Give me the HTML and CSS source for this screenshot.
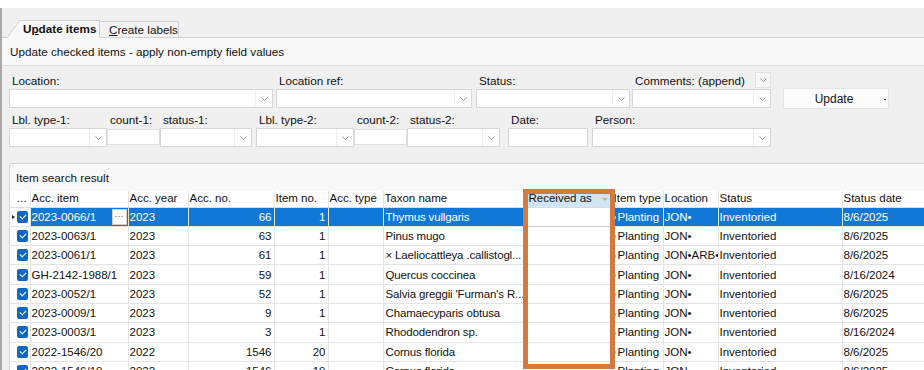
FILE: index.html
```html
<!DOCTYPE html>
<html lang="en">
<head>
    <meta charset="UTF-8">
    <meta name="viewport" content="width=device-width, initial-scale=1.0">
    <title>Update items</title>
    <link rel="stylesheet" href="styles.css">
</head>
<body>
    <div class="window">
        <div class="tabs">
            <div class="tab tab-active">U<u>p</u>date items</div>
            <div class="tab"><u>C</u>reate labels</div>
        </div>

        <div class="page-caption">Update checked items - apply non-empty field values</div>

        <div class="form">
            <div class="form-row">
                <div class="field w-location">
                    <div class="label">Location:</div>
                    <div class="combo"><span class="combo-btn"><svg width="7" height="4" viewBox="0 0 7 4"><path d="M0.5 0.5 L3.5 3.5 L6.5 0.5" fill="none" stroke="#9c9c9c"/></svg></span></div>
                </div>
                <div class="field w-locref">
                    <div class="label">Location ref:</div>
                    <div class="combo"><span class="combo-btn"><svg width="7" height="4" viewBox="0 0 7 4"><path d="M0.5 0.5 L3.5 3.5 L6.5 0.5" fill="none" stroke="#9c9c9c"/></svg></span></div>
                </div>
                <div class="field w-status">
                    <div class="label">Status:</div>
                    <div class="combo"><span class="combo-btn"><svg width="7" height="4" viewBox="0 0 7 4"><path d="M0.5 0.5 L3.5 3.5 L6.5 0.5" fill="none" stroke="#9c9c9c"/></svg></span></div>
                </div>
                <div class="field w-comments">
                    <div class="label label-split">
                        <span>Comments: (append)</span>
                        <span class="mini-combo"><svg width="7" height="4" viewBox="0 0 7 4"><path d="M0.5 0.5 L3.5 3.5 L6.5 0.5" fill="none" stroke="#9c9c9c"/></svg></span>
                    </div>
                    <div class="combo"><span class="combo-btn"><svg width="7" height="4" viewBox="0 0 7 4"><path d="M0.5 0.5 L3.5 3.5 L6.5 0.5" fill="none" stroke="#9c9c9c"/></svg></span></div>
                </div>
                <button class="update-button">Update</button>
            </div>

            <div class="form-row row-2">
                <div class="field w-lbl">
                    <div class="label">Lbl. type-1:</div>
                    <div class="combo"><span class="combo-btn"><svg width="7" height="4" viewBox="0 0 7 4"><path d="M0.5 0.5 L3.5 3.5 L6.5 0.5" fill="none" stroke="#9c9c9c"/></svg></span></div>
                </div>
                <div class="field w-count">
                    <div class="label">count-1:</div>
                    <div class="textbox small"></div>
                </div>
                <div class="field w-stat1">
                    <div class="label">status-1:</div>
                    <div class="combo"><span class="combo-btn"><svg width="7" height="4" viewBox="0 0 7 4"><path d="M0.5 0.5 L3.5 3.5 L6.5 0.5" fill="none" stroke="#9c9c9c"/></svg></span></div>
                </div>
                <div class="field w-lbl gap-4">
                    <div class="label">Lbl. type-2:</div>
                    <div class="combo"><span class="combo-btn"><svg width="7" height="4" viewBox="0 0 7 4"><path d="M0.5 0.5 L3.5 3.5 L6.5 0.5" fill="none" stroke="#9c9c9c"/></svg></span></div>
                </div>
                <div class="field w-count">
                    <div class="label">count-2:</div>
                    <div class="textbox small"></div>
                </div>
                <div class="field w-stat2">
                    <div class="label">status-2:</div>
                    <div class="combo"><span class="combo-btn"><svg width="7" height="4" viewBox="0 0 7 4"><path d="M0.5 0.5 L3.5 3.5 L6.5 0.5" fill="none" stroke="#9c9c9c"/></svg></span></div>
                </div>
                <div class="field w-date">
                    <div class="label">Date:</div>
                    <div class="textbox"></div>
                </div>
                <div class="field w-person">
                    <div class="label">Person:</div>
                    <div class="combo"><span class="combo-btn"><svg width="7" height="4" viewBox="0 0 7 4"><path d="M0.5 0.5 L3.5 3.5 L6.5 0.5" fill="none" stroke="#9c9c9c"/></svg></span></div>
                </div>
            </div>
        </div>

        <div class="result-panel">
            <div class="panel-caption">Item search result</div>
            <table class="grid">
                <colgroup>
                    <col style="width:7px"><col style="width:13px"><col style="width:98px"><col style="width:60px">
                    <col style="width:86px"><col style="width:54px"><col style="width:55px"><col style="width:140px">
                    <col style="width:89px"><col style="width:51px"><col style="width:55px"><col style="width:124px">
                    <col style="width:100px">
                </colgroup>
                <thead>
                    <tr>
                        <th class="ind"></th>
                        <th class="chk">...</th>
                        <th>Acc. item</th>
                        <th>Acc. year</th>
                        <th>Acc. no.</th>
                        <th>Item no.</th>
                        <th>Acc. type</th>
                        <th>Taxon name</th>
                        <th class="recv-head">Received as<span class="filter-arrow"></span></th>
                        <th>Item type</th>
                        <th>Location</th>
                        <th>Status</th>
                        <th>Status date</th>
                    </tr>
                </thead>
                <tbody>
                    <tr class="selected">
                        <td class="ind"><span class="row-pointer"></span></td>
                        <td class="chk"><span class="checkbox"></span></td>
                        <td><div class="cell-edit"><span>2023-0066/1</span><span class="ellipsis-btn">···</span></div></td>
                        <td>2023</td><td class="num">66</td><td class="num">1</td><td></td>
                        <td class="taxon">Thymus vullgaris</td><td class="recv"></td>
                        <td class="itype">Planting</td><td>JON•</td><td>Inventoried</td><td>8/6/2025</td>
                    </tr>
                    <tr>
                        <td class="ind"></td><td class="chk"><span class="checkbox"></span></td>
                        <td>2023-0063/1</td><td>2023</td><td class="num">63</td><td class="num">1</td><td></td>
                        <td class="taxon">Pinus mugo</td><td class="recv"></td>
                        <td class="itype">Planting</td><td>JON•</td><td>Inventoried</td><td>8/6/2025</td>
                    </tr>
                    <tr>
                        <td class="ind"></td><td class="chk"><span class="checkbox"></span></td>
                        <td>2023-0061/1</td><td>2023</td><td class="num">61</td><td class="num">1</td><td></td>
                        <td class="taxon">× Laeliocattleya .callistogl...</td><td class="recv"></td>
                        <td class="itype">Planting</td><td>JON•ARB•</td><td>Inventoried</td><td>8/6/2025</td>
                    </tr>
                    <tr>
                        <td class="ind"></td><td class="chk"><span class="checkbox"></span></td>
                        <td>GH-2142-1988/1</td><td>2023</td><td class="num">59</td><td class="num">1</td><td></td>
                        <td class="taxon">Quercus coccinea</td><td class="recv"></td>
                        <td class="itype">Planting</td><td>JON•</td><td>Inventoried</td><td>8/16/2024</td>
                    </tr>
                    <tr>
                        <td class="ind"></td><td class="chk"><span class="checkbox"></span></td>
                        <td>2023-0052/1</td><td>2023</td><td class="num">52</td><td class="num">1</td><td></td>
                        <td class="taxon">Salvia greggii 'Furman's R...</td><td class="recv"></td>
                        <td class="itype">Planting</td><td>JON•</td><td>Inventoried</td><td>8/6/2025</td>
                    </tr>
                    <tr>
                        <td class="ind"></td><td class="chk"><span class="checkbox"></span></td>
                        <td>2023-0009/1</td><td>2023</td><td class="num">9</td><td class="num">1</td><td></td>
                        <td class="taxon">Chamaecyparis obtusa</td><td class="recv"></td>
                        <td class="itype">Planting</td><td>JON•</td><td>Inventoried</td><td>8/6/2025</td>
                    </tr>
                    <tr>
                        <td class="ind"></td><td class="chk"><span class="checkbox"></span></td>
                        <td>2023-0003/1</td><td>2023</td><td class="num">3</td><td class="num">1</td><td></td>
                        <td class="taxon">Rhododendron sp.</td><td class="recv"></td>
                        <td class="itype">Planting</td><td>JON•</td><td>Inventoried</td><td>8/16/2024</td>
                    </tr>
                    <tr>
                        <td class="ind"></td><td class="chk"><span class="checkbox"></span></td>
                        <td>2022-1546/20</td><td>2022</td><td class="num">1546</td><td class="num">20</td><td></td>
                        <td class="taxon">Cornus florida</td><td class="recv"></td>
                        <td class="itype">Planting</td><td>JON•</td><td>Inventoried</td><td>8/6/2025</td>
                    </tr>
                    <tr>
                        <td class="ind"></td><td class="chk"><span class="checkbox"></span></td>
                        <td>2022-1546/19</td><td>2022</td><td class="num">1546</td><td class="num">19</td><td></td>
                        <td class="taxon">Cornus florida</td><td class="recv"></td>
                        <td class="itype">Planting</td><td>JON•</td><td>Inventoried</td><td>8/6/2025</td>
                    </tr>
                </tbody>
            </table>

            <!-- highlight around the column -->
            <div class="column-mark"></div>
        </div>
    </div>
</body>
</html>
```

FILE: styles.css
```css
* {
    box-sizing: border-box;
}

body {
    margin: 0;
    width: 924px;
    height: 370px;
    overflow: hidden;
    background-color: #fff;
    font-family: "Liberation Sans", Arial, sans-serif;
    font-size: 11.7px;
    color: #111;
}

.window {
    margin-top: 8px;
    height: 362px;
    background-color: #f0f0f0;
    border-left: 2px solid #a9a9a9;
    overflow: hidden;
}

/* tabs */
.tabs {
    display: flex;
    align-items: flex-end;
    height: 30px;
    padding-left: 18px;
    border-bottom: 1px solid #d2d2d2;
}

.tab {
    height: 17px;
    line-height: 16px;
    width: 79px;
    padding-left: 9px;
    white-space: nowrap;
    background-color: #f4f4f4;
    border: 1px solid #cfcfcf;
    border-left: none;
    margin-bottom: -1px;
    border-bottom: 1px solid #d2d2d2;
}

.tab-active {
    position: relative;
    width: 80px;
    height: 18px;
    padding-left: 3px;
    font-weight: bold;
    background-color: #f8f8f8;
    border-bottom: 1px solid #f8f8f8;
}

.tab-active::before {
    content: '';
    position: absolute;
    left: -13px;
    top: -1px;
    width: 13px;
    height: 18px;
    background: linear-gradient(to bottom right, transparent calc(50% - 0.6px), #c9c9c9 50%, #f8f8f8 calc(50% + 0.6px));
}

.tab u {
    text-underline-offset: 1px;
}

.page-caption {
    height: 27px;
    line-height: 27px;
    padding-left: 8px;
    background-color: #f8f8f8;
}

/* form */
.form {
    border-top: 1px solid #dadada;
    padding: 6px 0 16px 7px;
}

.form-row {
    display: flex;
    align-items: flex-start;
}

.row-2 {
    margin-top: 2px;
}

.label {
    height: 17px;
    line-height: 17px;
    padding-left: 3px;
    white-space: nowrap;
}

.label-split {
    display: flex;
    justify-content: space-between;
    align-items: flex-start;
}

.mini-combo {
    width: 16px;
    height: 16px;
    background-color: #f7f7f7;
    border: 1px solid #e2e2e2;
    display: flex;
    align-items: center;
    justify-content: center;
}

.combo {
    display: flex;
    height: 19px;
    background-color: #fff;
    border: 1px solid #d7d7d7;
}

.combo-btn {
    margin-left: auto;
    width: 17px;
    border-left: 1px solid #efefef;
    display: flex;
    align-items: center;
    justify-content: center;
}

.textbox {
    height: 19px;
    background-color: #fff;
    border: 1px solid #d7d7d7;
}

.textbox.small {
    height: 16px;
    margin-top: 1px;
    border-color: #dedede;
}

.w-location { width: 264px; }
.w-locref { width: 196px; margin-left: 3px; }
.w-status { width: 154px; margin-left: 4px; }
.w-comments { width: 139px; margin-left: 2px; }

.w-lbl { width: 98px; }
.w-count { width: 53px; }
.w-stat1 { width: 92px; }
.w-stat2 { width: 93px; }
.w-date { width: 80px; margin-left: 8px; }
.w-person { width: 179px; margin-left: 4px; }
.gap-4 { margin-left: 4px; }

.update-button {
    position: relative;
    margin-left: 12px;
    margin-top: 16px;
    width: 106px;
    height: 21px;
    background-color: #fcfcfc;
    border: 1px solid #e4e4e4;
    font-family: inherit;
    font-size: 12px;
    color: #111;
    padding: 0 4px 0 0;
}

.update-button::after {
    content: '';
    position: absolute;
    right: 2px;
    top: 10px;
    width: 2px;
    height: 1px;
    background-color: #333;
}

/* result panel */
.result-panel {
    position: relative;
    margin-left: 7px;
    border-top: 1px solid #d3d3d3;
    border-left: 1px solid #d3d3d3;
    border-top-left-radius: 3px;
    background-color: #fff;
    height: 220px;
    overflow: hidden;
}

.panel-caption {
    height: 27px;
    line-height: 27px;
    padding-left: 6px;
    background-color: #f8f8f8;
}

.grid {
    table-layout: fixed;
    width: 932px;
    border-collapse: collapse;
    font-size: 11.5px;
}

.grid th,
.grid td {
    padding: 0 1px;
    white-space: nowrap;
    overflow: hidden;
    text-align: left;
    font-weight: normal;
    border-right: 1px solid #e4e4e4;
    border-bottom: 1px solid #e4e4e4;
}

.grid th {
    height: 16px;
    line-height: 15px;
    border-bottom-color: #dcdcdc;
}

.grid td {
    height: 19.3px;
    line-height: 18px;
}

.grid .ind {
    border-right: none;
    padding: 0;
}

.grid .chk {
    padding: 0;
}

.grid td.num {
    text-align: right;
    padding-right: 2px;
}

.grid td.taxon {
    padding-left: 2px;
    letter-spacing: -0.15px;
}

.recv-head {
    position: relative;
    background-color: #cfe6f8;
}

.grid th.recv-head {
    padding-left: 5px;
}

.filter-arrow {
    position: absolute;
    right: 4px;
    top: 7px;
    border-left: 3px solid transparent;
    border-right: 3px solid transparent;
    border-top: 3px solid #b5b5b5;
}

.itype::before {
    content: '';
    display: inline-block;
    width: 2px;
    height: 3px;
    margin-right: 2px;
    vertical-align: middle;
    background-color: #9bd79b;
}

.checkbox {
    display: block;
    position: relative;
    width: 11px;
    height: 12px;
    border-radius: 2px;
    background-color: #0d67c4;
}

.checkbox::after {
    content: '';
    position: absolute;
    left: 3px;
    top: 3px;
    width: 5px;
    height: 3px;
    border-left: 1px solid #fff;
    border-bottom: 1px solid #fff;
    transform: rotate(-45deg);
}

.row-pointer {
    display: block;
    margin-left: 2px;
    width: 0;
    height: 0;
    border-top: 2px solid transparent;
    border-bottom: 2px solid transparent;
    border-left: 3px solid #222;
}

.selected td {
    background-color: #0f77d5;
    color: #fff;
}

.selected td.ind,
.selected td.chk {
    background-color: #fff;
}

.selected td.recv {
    background-color: #fff;
    border: 1px solid #c9c9c9;
}

.cell-edit {
    display: flex;
    justify-content: space-between;
    align-items: center;
}

.ellipsis-btn {
    width: 15px;
    height: 16px;
    line-height: 12px;
    text-align: center;
    font-size: 9px;
    color: #555;
    background-color: #fff;
    border: 1px solid #cfcfcf;
}

.column-mark {
    position: absolute;
    left: 513px;
    top: 25px;
    width: 92px;
    height: 180px;
    border: 5px solid #d5793c;
}
```
